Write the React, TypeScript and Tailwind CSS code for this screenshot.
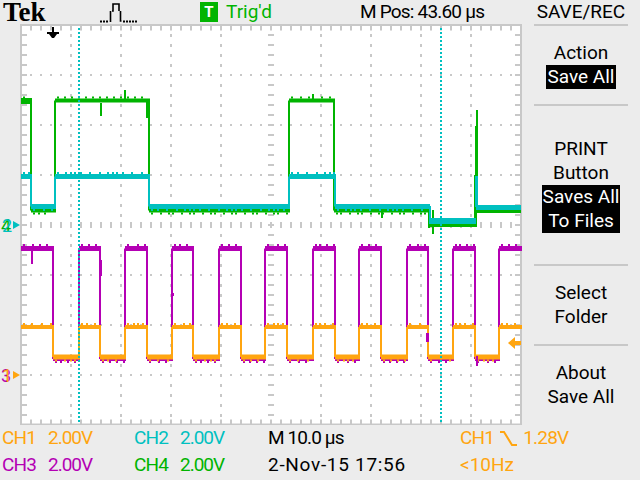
const GREEN = "#00b400";
const CYAN = "#00c0c0";
const MAGENTA = "#b400b4";
const ORANGE = "#ffa510";
const GRID = "#c8c8c8";

type Seg = [number, number];

// x position of each level change, the level flips at every entry
const greenEdges = [31, 55, 149, 289, 334];
const cyanEdges = [31, 55, 149, 289, 335];
const squareEdges = [53, 79, 100, 125, 147, 172, 193, 219, 241, 265, 287, 313, 335, 359, 381, 407, 428, 453, 475, 499];

function spans(edges: number[], end: number): { from: Seg; high: boolean }[] {
  const out: { from: Seg; high: boolean }[] = [];
  let prev = 21;
  edges.concat(end).forEach((x, i) => {
    out.push({ from: [prev, x], high: i % 2 === 0 });
    prev = x;
  });
  return out;
}

// small fixed noise so the traces do not look ruler-straight
function noise(from: number, to: number, y: number, seed: number, down: boolean) {
  const ticks = [];
  for (let x = from + 2; x < to - 1; x += 4 + ((x * seed) % 7)) {
    ticks.push(<rect key={x} x={x} y={down ? y : y - 2} width={2} height={2} />);
  }
  return ticks;
}

function Trace({ edges, end, high, low, color, width, lowWidth, seed }: { edges: number[]; end: number; high: number; low: number; color: string; width: number; lowWidth?: number; seed: number }) {
  return (
    <g fill={color}>
      {spans(edges, end).map(({ from, high: isHigh }) => {
        const y = isHigh ? high : low;
        const w = isHigh ? width : lowWidth ?? width;
        const down = !isHigh;
        return (
          <g key={from[0]}>
            <rect x={from[0]} y={y - w / 2} width={from[1] - from[0] + 1} height={w} />
            {noise(from[0], from[1], down ? y + w / 2 : y - w / 2, seed, down)}
          </g>
        );
      })}
      {edges.map((x) => (
        <rect key={x} x={x - 1} y={high} width={2} height={low - high} />
      ))}
    </g>
  );
}

function Scope() {
  return (
    <svg width="522" height="401" viewBox="0 24 522 401" className="block">
      <rect x="21" y="25" width="500" height="400" fill="#ffffff" />
      <g stroke={GRID} fill="none">
        {[71, 121, 171, 221, 321, 371, 421, 471].map((x) => (
          <line key={x} x1={x} x2={x} y1="24" y2="425" strokeWidth="2" strokeDasharray="3 7" />
        ))}
        {[75, 125, 175, 275, 325, 375].map((y) => (
          <line key={y} x1="20" x2="521" y1={y} y2={y} strokeWidth="2" strokeDasharray="2 8" />
        ))}
        <line x1="271" x2="271" y1="24" y2="425" strokeWidth="6" strokeDasharray="2 8" />
        <line x1="20" x2="521" y1="225" y2="225" strokeWidth="6" strokeDasharray="2 8" />
        <line x1="20" x2="521" y1="28" y2="28" strokeWidth="5" strokeDasharray="2 8" />
        <line x1="20" x2="521" y1="422" y2="422" strokeWidth="5" strokeDasharray="2 8" />
        <line x1="24" x2="24" y1="24" y2="425" strokeWidth="6" strokeDasharray="2 8" />
        <line x1="518" x2="518" y1="24" y2="425" strokeWidth="6" strokeDasharray="2 8" />
        <rect x="21" y="25" width="500" height="399.5" strokeWidth="2" />
      </g>

      {/* CH4 */}
      <Trace edges={greenEdges} end={429} high={100.5} low={210.5} color={GREEN} width={4} seed={3} />
      <g fill={GREEN}>
        <rect x="21" y="98" width="11" height="6" />
        <rect x="100" y="103" width="2" height="13" />
        <rect x="124" y="90" width="2" height="9" />
        <rect x="146" y="100" width="3" height="18" />
        <rect x="312" y="94" width="2" height="6" />
        <rect x="428" y="210" width="2" height="18" />
        <rect x="429" y="224" width="47" height="3" />
        <rect x="432" y="210" width="2" height="24" />
        <rect x="474" y="175" width="3" height="52" />
        <rect x="475" y="126" width="3" height="50" />
        <rect x="476" y="110" width="2" height="16" />
        <rect x="476" y="208" width="45" height="5" />
        <rect x="381" y="212" width="2" height="6" />
      </g>

      {/* CH2 */}
      <Trace edges={cyanEdges} end={429} high={176.5} low={206.5} color={CYAN} width={5} seed={4} />
      <g fill={CYAN}>
        <rect x="429" y="206" width="2" height="16" />
        <rect x="429" y="218" width="47" height="6" />
        <rect x="475" y="176" width="3" height="31" />
        <rect x="476" y="205" width="45" height="5" />
      </g>

      {/* CH3 then CH1 on top */}
      <g fill={MAGENTA}>
        <rect x="31" y="250" width="2" height="14" />
        <rect x="99" y="260" width="3" height="16" />
        <rect x="171" y="293" width="3" height="3" />
      </g>
      <Trace edges={squareEdges} end={521} high={248.5} low={359} color={MAGENTA} width={5} lowWidth={4} seed={6} />
      <Trace edges={squareEdges} end={521} high={327} low={357} color={ORANGE} width={4} lowWidth={5} seed={2} />
      <g fill={MAGENTA}>
        <rect x="426" y="333" width="3" height="9" />
        <rect x="476" y="356" width="2" height="10" />
      </g>

      {/* cursors */}
      <g stroke={CYAN} strokeWidth="2" strokeDasharray="2 2">
        <line x1="79" x2="79" y1="28" y2="422" />
        <line x1="441" x2="441" y1="28" y2="422" />
      </g>

      {/* markers */}
      <path d="M47 32h12v2h-2l-3 4h-2l-3-4h-2zM52 27h2v6h-2z" fill="#000000" />
      <path d="M13 221l7 4-7 4z" fill={CYAN} />
      <path d="M13 371l7 4-7 4z" fill={ORANGE} />
      <path d="M508 343l7-6v4h6v4h-6v4z" fill={ORANGE} />
      <text x="1" y="232" fontSize="18" fill={GREEN} fontFamily="Roboto, sans-serif">4</text>
      <text x="2" y="232" fontSize="18" fill={CYAN} fontFamily="Roboto, sans-serif">2</text>
      <text x="1" y="382" fontSize="18" fill={MAGENTA} fontFamily="Roboto, sans-serif">3</text>
      <text x="2" y="382" fontSize="18" fill={ORANGE} fontFamily="Roboto, sans-serif">1</text>
    </svg>
  );
}

function PulseIcon() {
  return (
    <svg width="37" height="22" viewBox="0 0 37 22" className="block">
      <path d="M10.5 21V10M12 10h1V3h5M18 3h1v7M20.5 10v10h1" stroke="#000000" strokeWidth="1.6" fill="none" />
      <path d="M0 20.5h9M23 20.5h14" stroke="#000000" strokeWidth="2" strokeDasharray="2 1" fill="none" />
    </svg>
  );
}

function Header() {
  return (
    <div className="flex h-[24px] items-center font-['Roboto',sans-serif] text-[19px]">
      <div className="ml-[3px] w-[97px] font-['Liberation_Serif',serif] text-[27px] leading-[24px] font-bold text-black">Tek</div>
      <div className="w-[100px]">
        <PulseIcon />
      </div>
      <div className="flex h-[20px] w-[18px] items-center justify-center bg-[#00b400] text-[15px] font-bold text-white">T</div>
      <div className="ml-[8px] w-[134px] text-[#00b400]">Trig'd</div>
      <div className="whitespace-pre tracking-[-0.8px] text-black">M Pos: 43.60 µs</div>
    </div>
  );
}

function MenuItem({ height, children }: { height: string; children: React.ReactNode }) {
  return (
    <div className={`${height} mx-[12px] flex flex-col items-center justify-center border-t-2 border-[#c8c8c8] text-[19px] leading-[24px]`}>
      {children}
    </div>
  );
}

function Menu() {
  return (
    <div className="flex w-[118px] flex-col font-['Roboto',sans-serif] text-black">
      <div className="flex h-[24px] items-center justify-center text-[19px]">SAVE/REC</div>
      <MenuItem height="h-[80px]">
        <div>Action</div>
        <div className="w-[70px] bg-black text-center text-white">Save All</div>
      </MenuItem>
      <MenuItem height="h-[160px]">
        <div>PRINT</div>
        <div>Button</div>
        <div className="w-[78px] bg-black text-center text-white">
          Saves All
          <br />
          To Files
        </div>
      </MenuItem>
      <MenuItem height="h-[80px]">
        <div>Select</div>
        <div>Folder</div>
      </MenuItem>
      <MenuItem height="h-[80px]">
        <div>About</div>
        <div>Save All</div>
      </MenuItem>
    </div>
  );
}

function SlopeIcon() {
  return (
    <svg width="17" height="16" viewBox="0 0 17 16" className="mx-[6px] block shrink-0">
      <path d="M0 1h4l8 13h5" stroke={ORANGE} strokeWidth="2" fill="none" />
    </svg>
  );
}

function Status() {
  return (
    <div className="grid h-[55px] grid-cols-[46px_86px_46px_88px_192px_1fr] grid-rows-[27px_27px] items-center pl-[2px] font-['Roboto',sans-serif] text-[19px]">
      <div className="tracking-[-0.8px] text-[#ffa510]">CH1</div>
      <div className="tracking-[-1px] text-[#ffa510]">2.00V</div>
      <div className="tracking-[-0.8px] text-[#00c0c0]">CH2</div>
      <div className="tracking-[-1px] text-[#00c0c0]">2.00V</div>
      <div className="tracking-[-0.9px] text-black">M 10.0 µs</div>
      <div className="flex items-center tracking-[-0.8px] text-[#ffa510]">
        CH1
        <SlopeIcon />
        1.28V
      </div>
      <div className="tracking-[-0.8px] text-[#b400b4]">CH3</div>
      <div className="tracking-[-1px] text-[#b400b4]">2.00V</div>
      <div className="tracking-[-0.8px] text-[#00b400]">CH4</div>
      <div className="tracking-[-1px] text-[#00b400]">2.00V</div>
      <div className="tracking-[0.7px] text-black">2-Nov-15 17:56</div>
      <div className="text-[#ffa510]">&lt;10Hz</div>
    </div>
  );
}

export default function App() {
  return (
    <div className="flex h-[480px] w-[640px] flex-col overflow-hidden bg-[#ececec]">
      <div className="flex h-[425px]">
        <div className="w-[522px]">
          <Header />
          <Scope />
        </div>
        <Menu />
      </div>
      <Status />
    </div>
  );
}
